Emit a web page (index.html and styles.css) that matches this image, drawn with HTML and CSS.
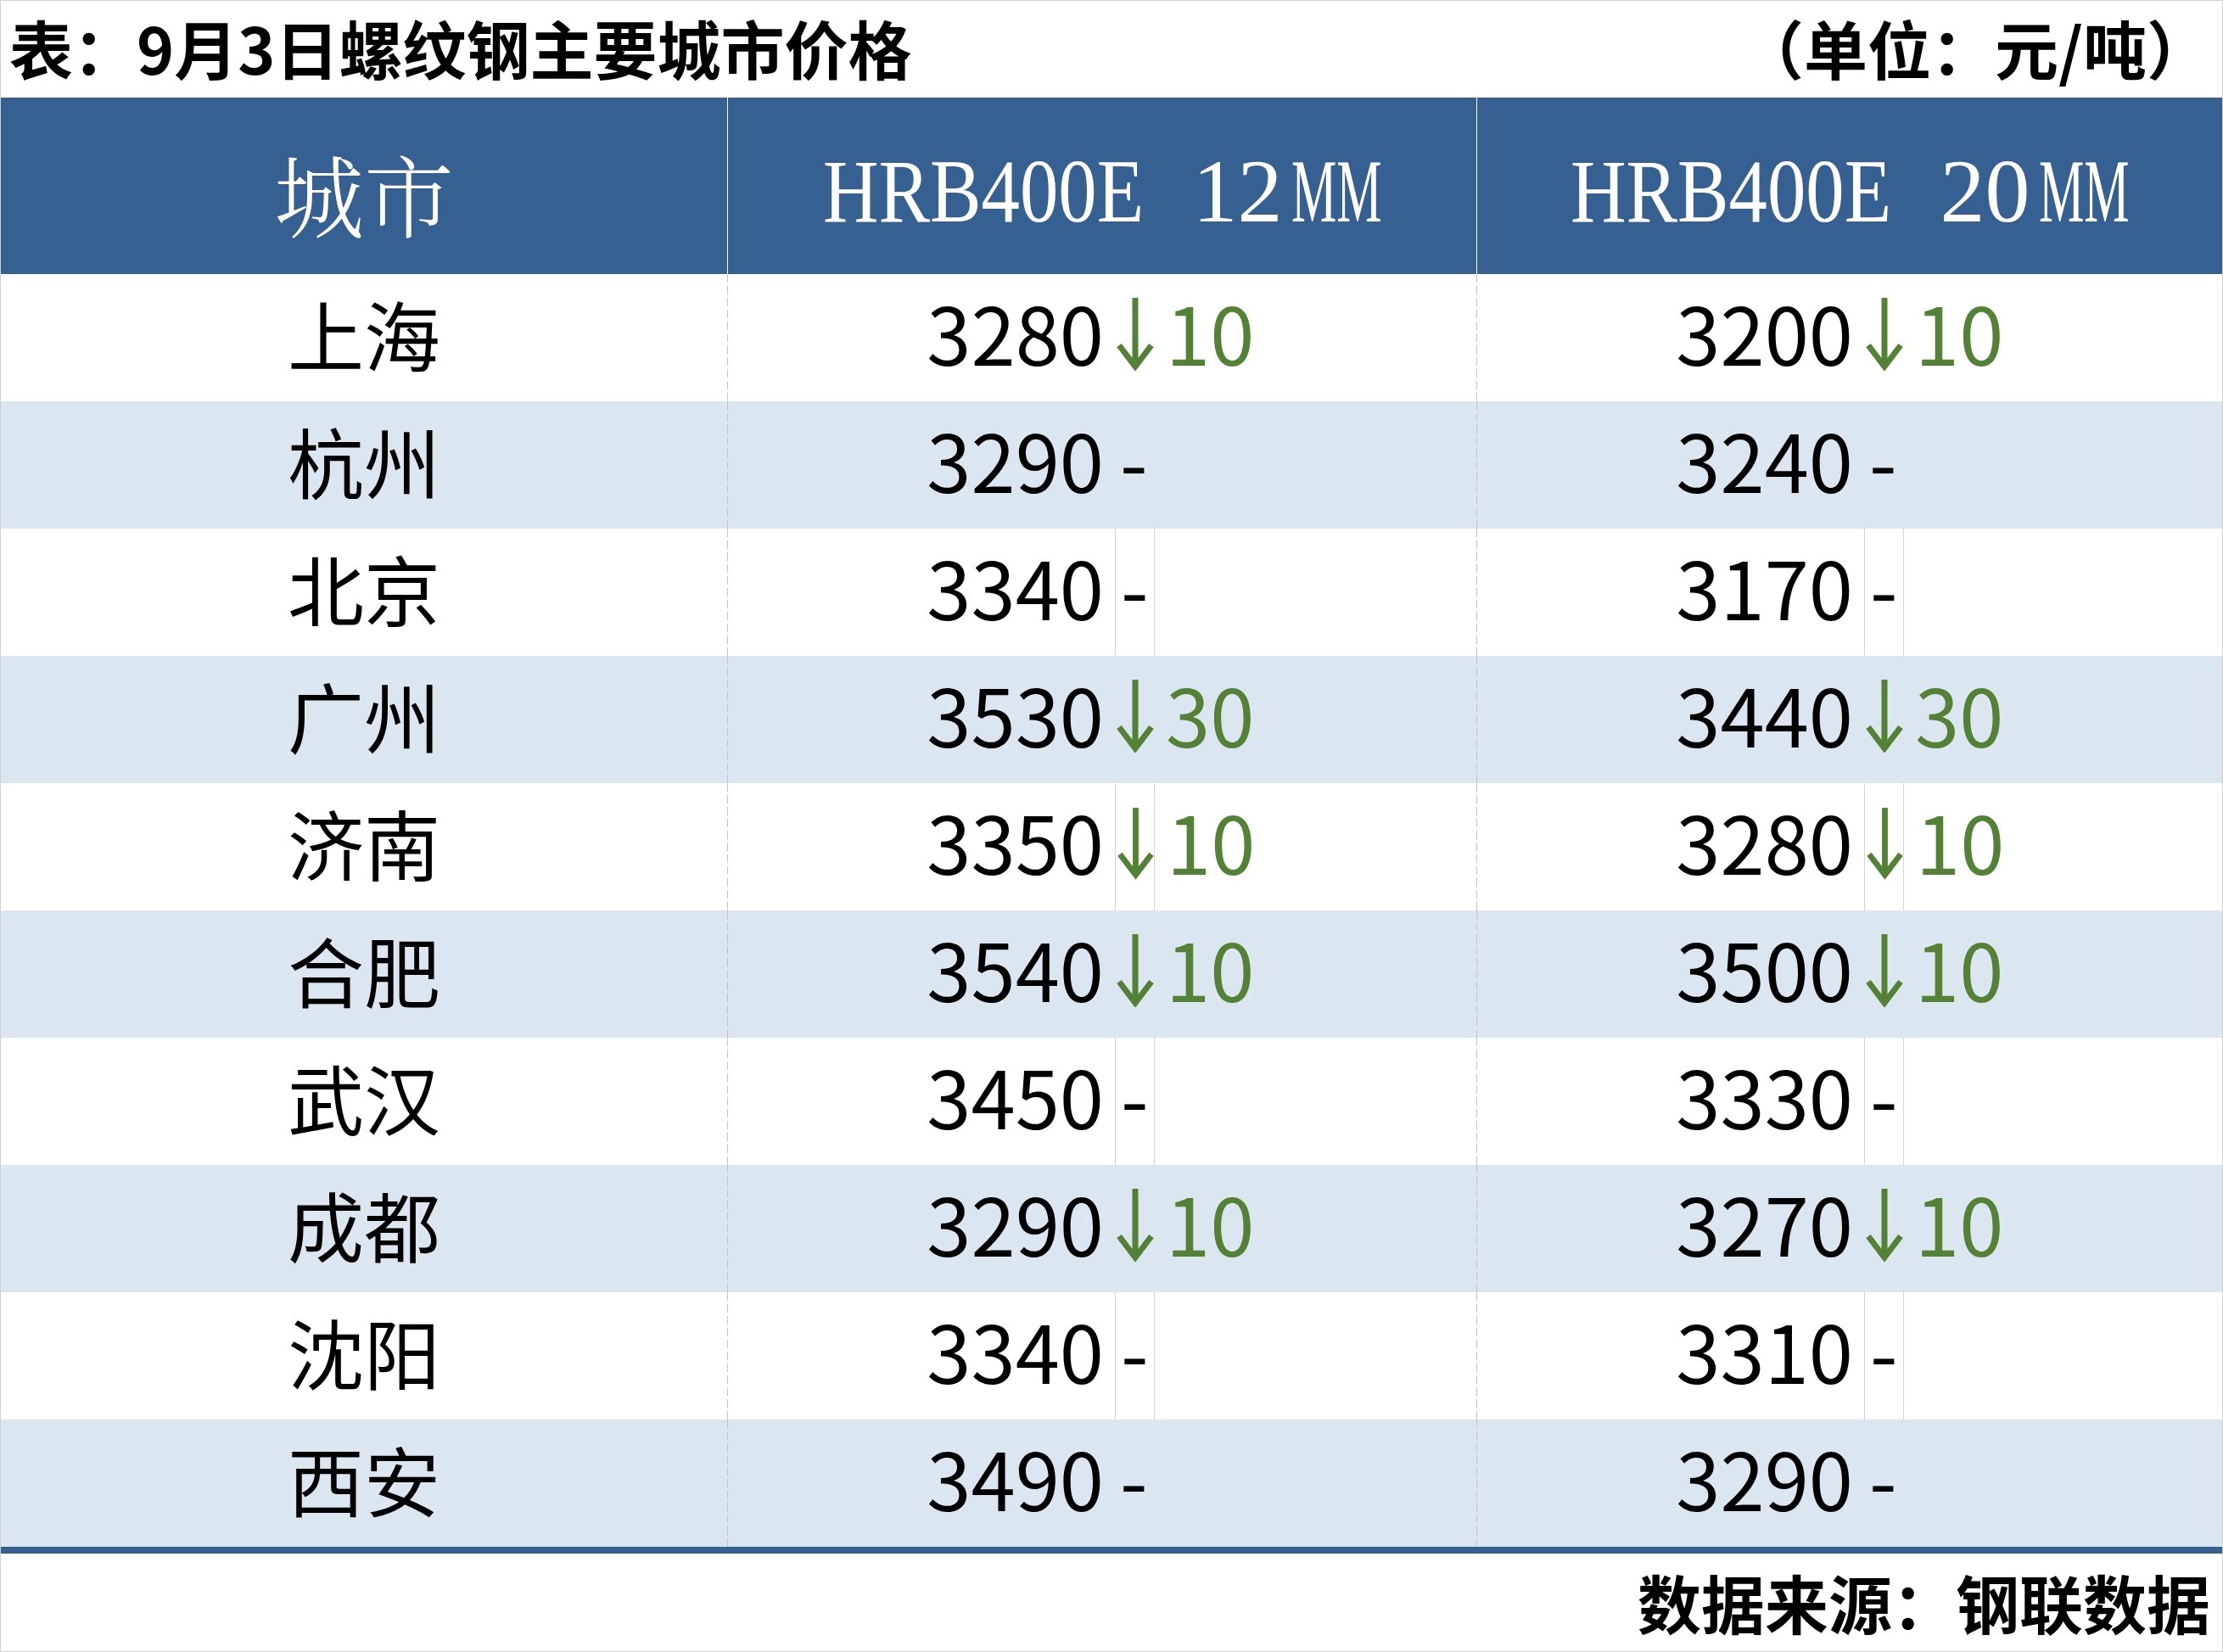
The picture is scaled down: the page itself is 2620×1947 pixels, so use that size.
FILE: index.html
```html
<!DOCTYPE html>
<html lang="zh-CN">
<head>
<meta charset="utf-8">
<title>9月3日螺纹钢主要城市价格</title>
<link rel="stylesheet" href="styles.css">
</head>
<body>
<div class="sheet">
  <div class="title-row">
    <div class="title">表：9月3日螺纹钢主要城市价格</div>
    <div class="unit">（单位：元/吨）</div>
  </div>

  <div class="table">
    <div class="head">
      <div class="hcell hcity">城市</div>
      <div class="hcell hspec"><span class="spec"><span class="p-grade">HRB400E</span><span class="p-num">12</span><span class="p-mm">MM</span></span></div>
      <div class="hcell hspec"><span class="spec"><span class="p-grade">HRB400E</span><span class="p-num">20</span><span class="p-mm">MM</span></span></div>
    </div>

    <div class="row">
      <div class="city">上海</div>
      <div class="val"><div class="price">3280</div><div class="mark"><svg class="arrow" viewBox="0 0 44 86" width="44" height="86"><line x1="22" y1="0" x2="22" y2="80"/><polyline points="3,56 22,81 41,56"/></svg></div><div class="chg">10</div></div>
      <div class="val"><div class="price">3200</div><div class="mark"><svg class="arrow" viewBox="0 0 44 86" width="44" height="86"><line x1="22" y1="0" x2="22" y2="80"/><polyline points="3,56 22,81 41,56"/></svg></div><div class="chg">10</div></div>
    </div>

    <div class="row alt">
      <div class="city">杭州</div>
      <div class="val"><div class="price">3290</div><div class="mark"><span class="dash">-</span></div><div class="chg"></div></div>
      <div class="val"><div class="price">3240</div><div class="mark"><span class="dash">-</span></div><div class="chg"></div></div>
    </div>

    <div class="row lines">
      <div class="city">北京</div>
      <div class="val"><div class="price">3340</div><div class="mark"><span class="dash">-</span></div><div class="chg"></div></div>
      <div class="val"><div class="price">3170</div><div class="mark"><span class="dash">-</span></div><div class="chg"></div></div>
    </div>

    <div class="row alt">
      <div class="city">广州</div>
      <div class="val"><div class="price">3530</div><div class="mark"><svg class="arrow" viewBox="0 0 44 86" width="44" height="86"><line x1="22" y1="0" x2="22" y2="80"/><polyline points="3,56 22,81 41,56"/></svg></div><div class="chg">30</div></div>
      <div class="val"><div class="price">3440</div><div class="mark"><svg class="arrow" viewBox="0 0 44 86" width="44" height="86"><line x1="22" y1="0" x2="22" y2="80"/><polyline points="3,56 22,81 41,56"/></svg></div><div class="chg">30</div></div>
    </div>

    <div class="row lines">
      <div class="city">济南</div>
      <div class="val"><div class="price">3350</div><div class="mark"><svg class="arrow" viewBox="0 0 44 86" width="44" height="86"><line x1="22" y1="0" x2="22" y2="80"/><polyline points="3,56 22,81 41,56"/></svg></div><div class="chg">10</div></div>
      <div class="val"><div class="price">3280</div><div class="mark"><svg class="arrow" viewBox="0 0 44 86" width="44" height="86"><line x1="22" y1="0" x2="22" y2="80"/><polyline points="3,56 22,81 41,56"/></svg></div><div class="chg">10</div></div>
    </div>

    <div class="row alt">
      <div class="city">合肥</div>
      <div class="val"><div class="price">3540</div><div class="mark"><svg class="arrow" viewBox="0 0 44 86" width="44" height="86"><line x1="22" y1="0" x2="22" y2="80"/><polyline points="3,56 22,81 41,56"/></svg></div><div class="chg">10</div></div>
      <div class="val"><div class="price">3500</div><div class="mark"><svg class="arrow" viewBox="0 0 44 86" width="44" height="86"><line x1="22" y1="0" x2="22" y2="80"/><polyline points="3,56 22,81 41,56"/></svg></div><div class="chg">10</div></div>
    </div>

    <div class="row lines">
      <div class="city">武汉</div>
      <div class="val"><div class="price">3450</div><div class="mark"><span class="dash">-</span></div><div class="chg"></div></div>
      <div class="val"><div class="price">3330</div><div class="mark"><span class="dash">-</span></div><div class="chg"></div></div>
    </div>

    <div class="row alt">
      <div class="city">成都</div>
      <div class="val"><div class="price">3290</div><div class="mark"><svg class="arrow" viewBox="0 0 44 86" width="44" height="86"><line x1="22" y1="0" x2="22" y2="80"/><polyline points="3,56 22,81 41,56"/></svg></div><div class="chg">10</div></div>
      <div class="val"><div class="price">3270</div><div class="mark"><svg class="arrow" viewBox="0 0 44 86" width="44" height="86"><line x1="22" y1="0" x2="22" y2="80"/><polyline points="3,56 22,81 41,56"/></svg></div><div class="chg">10</div></div>
    </div>

    <div class="row lines">
      <div class="city">沈阳</div>
      <div class="val"><div class="price">3340</div><div class="mark"><span class="dash">-</span></div><div class="chg"></div></div>
      <div class="val"><div class="price">3310</div><div class="mark"><span class="dash">-</span></div><div class="chg"></div></div>
    </div>

    <div class="row alt">
      <div class="city">西安</div>
      <div class="val"><div class="price">3490</div><div class="mark"><span class="dash">-</span></div><div class="chg"></div></div>
      <div class="val"><div class="price">3290</div><div class="mark"><span class="dash">-</span></div><div class="chg"></div></div>
    </div>

    <div class="bottom-bar"></div>
  </div>

  <div class="footer">数据来源：钢联数据</div>
</div>
</body>
</html>
```

FILE: styles.css
```css
html, body {
  margin: 0;
  padding: 0;
  background: #ffffff;
}

.sheet {
  width: 2620px;
  height: 1947px;
  box-sizing: border-box;
  border: 1px solid #d0d0d0;
  font-family: "Noto Sans CJK SC", "Noto Sans", sans-serif;
  color: #000000;
  overflow: hidden;
}

.title-row {
  height: 114px;
  box-sizing: border-box;
  display: flex;
  justify-content: space-between;
  align-items: center;
  padding: 0 14px 5px 10px;
  font-size: 75px;
  font-weight: 700;
  line-height: 1.3;
}

.table {
  display: flex;
  flex-direction: column;
}

.head {
  height: 208px;
  display: grid;
  grid-template-columns: 856px 883px 1fr;
  background: #376092;
  color: #ffffff;
}

.hcell {
  display: flex;
  align-items: center;
  justify-content: center;
  box-sizing: border-box;
}

.hcell + .hcell {
  border-left: 1px solid #ffffff;
}

.hcity {
  font-family: "Noto Serif CJK SC", "Noto Sans CJK SC", serif;
  font-weight: 300;
  font-size: 106px;
  line-height: 1.3;
  padding-top: 16px;
}

.spec {
  display: flex;
  align-items: baseline;
  font-family: "Liberation Serif", serif;
  font-size: 106px;
  line-height: 1.2;
  padding-top: 14px;
  white-space: nowrap;
}

.p-grade,
.p-num,
.p-mm {
  display: inline-block;
  transform-origin: left center;
}

.p-grade {
  transform: scaleX(0.856);
  margin-right: -64px;
}

.p-num {
  margin-left: 58px;
  margin-right: 10px;
}

.p-mm {
  transform: scaleX(0.565);
  margin-right: -82px;
}

.row {
  height: 150px;
  display: grid;
  grid-template-columns: 856px 883px 1fr;
  background: #ffffff;
}

.row.alt {
  background: #dce6f1;
}

.city {
  display: flex;
  align-items: center;
  justify-content: center;
  font-size: 90px;
  line-height: 1.3;
  padding-bottom: 12px;
}

.val {
  display: grid;
  grid-template-columns: 457px 46px 1fr;
  box-sizing: border-box;
  background-image: linear-gradient(to bottom, #c4c4c4 70%, rgba(0,0,0,0) 70%);
  background-size: 1px 14px;
  background-repeat: repeat-y;
  background-position: left top;
  font-size: 94px;
  line-height: 1.3;
}

.price,
.mark,
.chg {
  display: flex;
  align-items: center;
  box-sizing: border-box;
  padding-bottom: 16px;
}

.price {
  justify-content: flex-end;
  padding-right: 13px;
}

.mark {
  justify-content: flex-start;
  overflow: visible;
}

.dash {
  padding-left: 6px;
}

.chg {
  color: #538135;
  padding-left: 14px;
}

.row.lines .mark,
.row.lines .chg {
  border-left: 1px solid #d4d4d4;
}

.arrow {
  display: block;
  margin-left: 2px;
  margin-top: 8px;
  fill: none;
  stroke: #538135;
  stroke-width: 7;
  stroke-linejoin: miter;
}

.bottom-bar {
  height: 8px;
  background: #376092;
}

.footer {
  height: 113px;
  display: flex;
  justify-content: flex-end;
  align-items: center;
  padding-right: 14px;
  font-size: 75px;
  font-weight: 700;
  line-height: 1.3;
}
```
